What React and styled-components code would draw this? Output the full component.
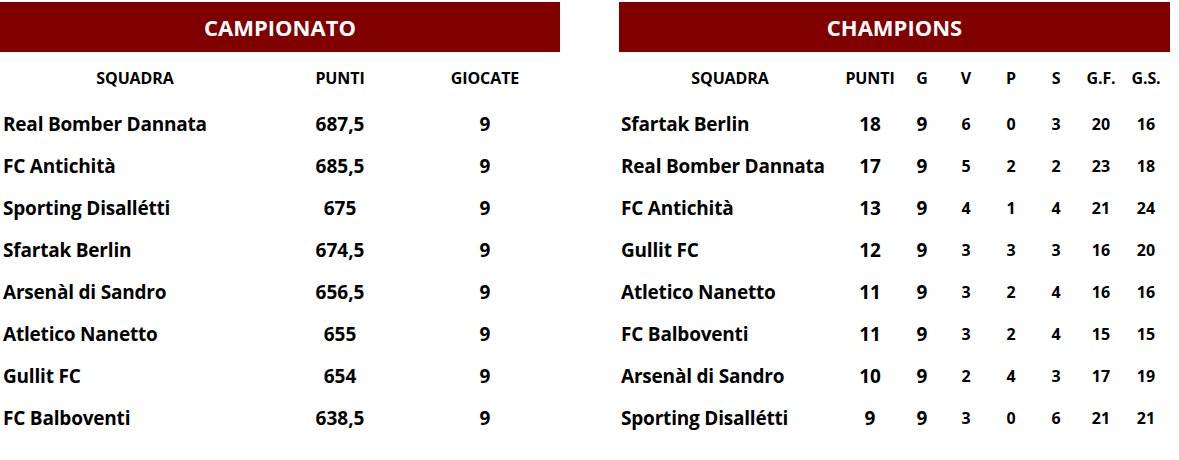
import React from 'react'
import styled, { createGlobalStyle } from 'styled-components';

const Global = createGlobalStyle`
body {
    margin: 0;
    background: #ffffff;
    font-family: "Open Sans", Lato, sans-serif;
    color: #000;
}
`;

const Page = styled.div`
display: flex;
gap: 59px;
padding-top: 2px;
`;

const Panel = styled.div`
width: ${props => props.width}px;
`;

const Banner = styled.div`
height: 50px;
background: #800000;
color: #fff;
display: flex;
align-items: center;
justify-content: center;
font-weight: 700;
font-size: 22px;
`;

const Table = styled.div`
display: grid;
grid-template-columns: ${props => props.cols};
grid-auto-rows: 42px;
grid-template-rows: 51px;
align-items: center;
`;

const Head = styled.div`
font-weight: 700;
font-size: 16px;
letter-spacing: -0.1px;
text-align: center;
`;

const Name = styled.div`
font-weight: 700;
font-size: 19px;
letter-spacing: -0.2px;
padding-left: ${props => props.pad}px;
white-space: nowrap;
`;

const Num = styled.div`
font-weight: 700;
font-size: ${props => props.small ? 16 : 19}px;
text-align: center;
`;

const campionato = [
    ['Real Bomber Dannata', '687,5', 9],
    ['FC Antichità', '685,5', 9],
    ['Sporting Disallétti', '675', 9],
    ['Sfartak Berlin', '674,5', 9],
    ['Arsenàl di Sandro', '656,5', 9],
    ['Atletico Nanetto', '655', 9],
    ['Gullit FC', '654', 9],
    ['FC Balboventi', '638,5', 9],
];

const champions = [
    ['Sfartak Berlin', 18, 9, 6, 0, 3, 20, 16],
    ['Real Bomber Dannata', 17, 9, 5, 2, 2, 23, 18],
    ['FC Antichità', 13, 9, 4, 1, 4, 21, 24],
    ['Gullit FC', 12, 9, 3, 3, 3, 16, 20],
    ['Atletico Nanetto', 11, 9, 3, 2, 4, 16, 16],
    ['FC Balboventi', 11, 9, 3, 2, 4, 15, 15],
    ['Arsenàl di Sandro', 10, 9, 2, 4, 3, 17, 19],
    ['Sporting Disallétti', 9, 9, 3, 0, 6, 21, 21],
];

function App() {
    return (
        <Page>
            <Global />
            <Panel width={560}>
                <Banner>CAMPIONATO</Banner>
                <Table cols="270px 140px 150px">
                    <Head>SQUADRA</Head>
                    <Head>PUNTI</Head>
                    <Head>GIOCATE</Head>
                    {campionato.map(r => (
                        <React.Fragment key={r[0]}>
                            <Name pad={3}>{r[0]}</Name>
                            <Num>{r[1]}</Num>
                            <Num>{r[2]}</Num>
                        </React.Fragment>
                    ))}
                </Table>
            </Panel>
            <Panel width={551}>
                <Banner>CHAMPIONS</Banner>
                <Table cols="222px 58px 46px 42px 48px 42px 48px 42px">
                    <Head>SQUADRA</Head>
                    <Head>PUNTI</Head>
                    <Head>G</Head>
                    <Head>V</Head>
                    <Head>P</Head>
                    <Head>S</Head>
                    <Head>G.F.</Head>
                    <Head>G.S.</Head>
                    {champions.map(r => (
                        <React.Fragment key={r[0]}>
                            <Name pad={2}>{r[0]}</Name>
                            <Num>{r[1]}</Num>
                            <Num>{r[2]}</Num>
                            {r.slice(3).map((v, i) => <Num small key={i}>{v}</Num>)}
                        </React.Fragment>
                    ))}
                </Table>
            </Panel>
        </Page>
    )
}

export default App
